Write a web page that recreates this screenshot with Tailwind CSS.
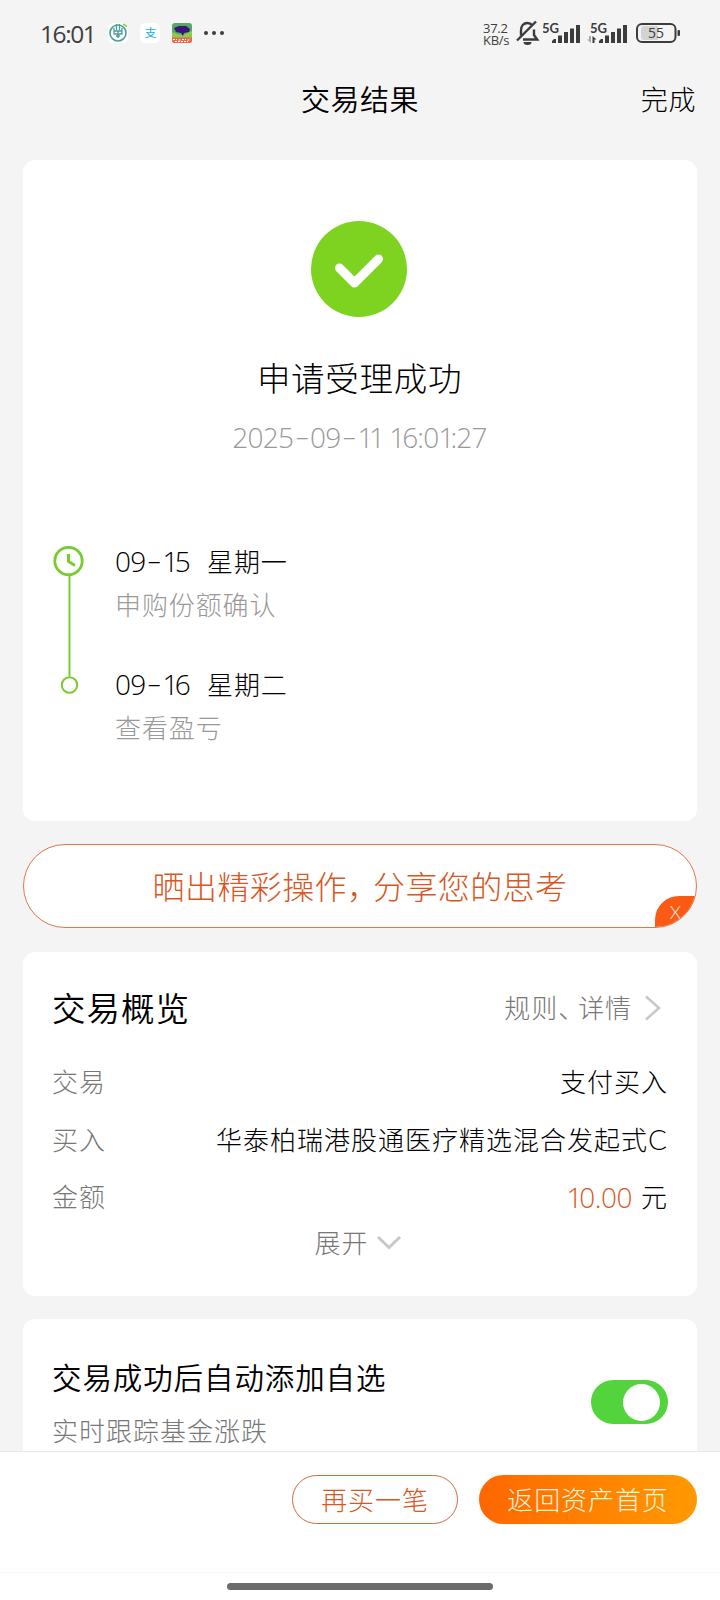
<!DOCTYPE html>
<html lang="zh-CN">
<head>
  <meta charset="UTF-8">
  <meta name="viewport" content="width=device-width, initial-scale=1.0">
  <title>交易结果</title>
  <script src="https://cdn.jsdelivr.net/npm/@tailwindcss/browser@4"></script>
</head>
<body class="bg-[#f4f4f4] text-black font-light font-['Lato','Noto_Sans_CJK_SC',sans-serif]">
  <div class="w-[720px] h-[1600px] flex flex-col overflow-hidden">

    <!-- Status bar -->
    <div class="h-[66px] shrink-0 flex items-center pl-[40px] pr-[40px] text-[#404040]">
      <span class="w-[68px] pt-px text-[24.500px] leading-[30px] font-normal font-['Open_Sans',sans-serif] tracking-[-1.400px]">16:01</span>
      <svg class="w-5 h-5 shrink-0" viewBox="0 0 20 20" fill="none">
        <rect width="20" height="20" rx="5" fill="#fff"/>
        <circle cx="10" cy="10" r="8" stroke="#4a9f98" stroke-width="1.6"/>
        <path d="M8.500 1v6M11.500 1v6M6 5v6h8V5M6 8h8M10 8v7M8 13h4" stroke="#4a9f98" stroke-width="1.300"/>
        <path d="M15 1l4 2.500" stroke="#8bd14f" stroke-width="1.6"/>
      </svg>
      <span class="ml-3 w-5 h-5 shrink-0 rounded-[5px] bg-white text-[#19aee4] font-normal text-[11px] leading-[20px] text-center"><span class="inline-block scale-x-110">支</span></span>
      <svg class="ml-3 w-5 h-5 shrink-0" viewBox="0 0 20 20">
        <rect width="20" height="20" rx="3" fill="#55a866"/>
        <path d="M0 9l5 2 6 1 9-4v7H0z" fill="#8fc94d"/>
        <path d="M2 5l5-2h7l4 3-1 3-5 1-1 3-2-3-5-1z" fill="#3b1479"/>
        <path d="M0 14.500h20v2.500a3 3 0 0 1-3 3H3a3 3 0 0 1-3-3z" fill="#e9694a"/>
        <path d="M1 16.500h4M6.500 17h2M10 16.500h4M15.500 17h3M3 18.500h13" stroke="#fff" stroke-width="1" stroke-dasharray="2 1"/>
      </svg>
      <svg class="ml-3 w-5 h-5 shrink-0" viewBox="0 0 20 20" fill="#3c3c3c">
        <circle cx="2" cy="10" r="2"/><circle cx="10" cy="10" r="2"/><circle cx="18" cy="10" r="2"/>
      </svg>

      <div class="ml-auto flex items-center">
        <div class="w-[34px] pt-px font-['Open_Sans',sans-serif] text-[13px] tracking-[-0.300px] font-normal whitespace-nowrap flex flex-col">
          <span class="h-[12px] leading-[12px]">37.2</span>
          <span class="h-[12px] leading-[12px]">KB/s</span>
        </div>
        <svg class="-ml-px w-6 h-[26px]" viewBox="0 0 24 26" fill="none" stroke="#3c3c3c" stroke-width="2.400">
          <path d="M5 15.500V10.500C5 6 7.500 3 11.500 3c2 0 3.600.8 4.800 2.200M18 9.500V15l3.200 4.500H7"/>
          <path d="M1 20.500L20 1.500"/>
          <path d="M7.500 22h8a4 3 0 0 1-8 0z" fill="#3c3c3c" stroke="none"/>
        </svg>
        <svg class="ml-[3px] w-[38px] h-[26px]" viewBox="0 0 38 26" fill="#3c3c3c">
          <text x="-1" y="12.500" font-family="Lato" font-weight="700" font-size="13">5G</text>
          <path d="M9 23v-2l2-2h2v4zM15 15.500h4v7.500H15zM21 12h4v11H21zM27 8.500h4V23H27zM33 5h4v18H33z"/>
        </svg>
        <svg class="ml-[6px] w-[42px] h-[26px]" viewBox="0 0 42 26" fill="#3c3c3c">
          <text x="3" y="12.500" font-family="Lato" font-weight="700" font-size="13">5G</text>
          <path d="M4 16v7l-4-3.500h2V16z" fill="#aaa"/>
          <path d="M5.500 23v-7l4 3.500h-2V23z"/>
          <path d="M12 23v-2l2-2h2v4zM18 15.500h4v7.500H18zM24 12h4v11H24zM30 8.500h4V23H30zM36 5h4v18H36z"/>
        </svg>
        <svg class="ml-[7px] w-[44px] h-[20px]" viewBox="0 0 44 20">
          <path d="M8 3h14v14H8a3 3 0 0 1-3-3V6a3 3 0 0 1 3-3z" fill="#d3d3d3"/>
          <rect x="1" y="1" width="38.500" height="18" rx="5" fill="none" stroke="#3c3c3c" stroke-width="2"/>
          <rect x="41.500" y="7" width="2.500" height="6" rx="1" fill="#3c3c3c"/>
          <text x="20" y="15" text-anchor="middle" font-family="Open Sans" font-size="14" font-weight="400" fill="#3c3c3c">55</text>
        </svg>
      </div>
    </div>

    <!-- Title bar -->
    <header class="h-[94px] shrink-0 grid grid-cols-3 items-start pt-[14px] px-[24px] leading-[40px]">
      <h1 class="col-start-2 text-center text-[29px] font-[350] tracking-[0.500px]">交易结果</h1>
      <a class="text-right text-[27px] tracking-[0.600px]">完成</a>
    </header>

    <main class="flex-1 min-h-0 overflow-hidden pl-[23px] pr-[23px] flex flex-col gap-[23px]">
      <!-- Result -->
      <section class="h-[661px] shrink-0 rounded-xl bg-white flex flex-col items-center pt-[61px] pr-px">
        <svg class="w-24 h-24 -ml-px" viewBox="0 0 96 96" fill="none">
          <circle cx="48" cy="48" r="48" fill="#7ed321"/>
          <path d="M28.500 47L43.500 62L67.500 38" stroke="#fff" stroke-width="9" stroke-linecap="round" stroke-linejoin="round"/>
        </svg>
        <h2 class="mt-[37px] text-[33.500px] leading-[48px] tracking-[0.700px]">申请受理成功</h2>
        <p class="mt-[15px] font-['Open_Sans',sans-serif] text-[28px] leading-[40px] tracking-[-0.800px] text-[#999]">2025<span class="inline-block w-[17px] text-center scale-x-160 -translate-y-[2px]">-</span>09<span class="inline-block w-[17px] text-center scale-x-160 -translate-y-[2px]">-</span><span class="tracking-[-4.500px]">11</span><span class="tracking-[1.500px]"> </span><span class="tracking-[-3px]">1</span>6:0<span class="tracking-[-4px]">1</span>:27</p>

        <div class="self-stretch mt-[88px] pl-[30px] flex">
          <svg class="w-[32px] h-[150px] shrink-0" viewBox="0 0 32 150" fill="none" stroke="#79cb30">
            <circle cx="15.500" cy="16" r="13.700" stroke-width="2.800"/>
            <path d="M15.500 9v7.500l6.500 4" stroke-width="3"/>
            <path d="M16.500 30v101.500" stroke-width="2"/>
            <circle cx="16.500" cy="140" r="7.700" stroke-width="2"/>
          </svg>
          <ul class="pl-[30px] text-[26px] tracking-[0.900px]">
            <li class="h-[123px]">
              <div class="flex leading-[34px]"><span class="w-[92px] font-['Open_Sans',sans-serif] text-[28px] leading-[32px] tracking-[-0.800px]">09<span class="inline-block w-[17px] text-center scale-x-160 -translate-y-[2px]">-</span><span class="tracking-[-3.500px]">1</span>5</span><span>星期一</span></div>
              <div class="mt-[9px] leading-[34px] text-[#999]">申购份额确认</div>
            </li>
            <li>
              <div class="flex leading-[34px]"><span class="w-[92px] font-['Open_Sans',sans-serif] text-[28px] leading-[32px] tracking-[-0.800px]">09<span class="inline-block w-[17px] text-center scale-x-160 -translate-y-[2px]">-</span><span class="tracking-[-3.500px]">1</span>6</span><span>星期二</span></div>
              <div class="mt-[9px] leading-[34px] text-[#999]">查看盈亏</div>
            </li>
          </ul>
        </div>
      </section>

      <!-- Share banner -->
      <section class="relative h-[84px] shrink-0 rounded-full overflow-hidden border border-[#e0764a] bg-white flex items-center justify-center pt-[2px] text-[32px] text-[#d9571f] tracking-[0.400px]">
        <span>晒出精彩操作<span class="tracking-[-6px]">，</span>分享您的思考</span>
        <span class="absolute right-0 bottom-0 w-[41px] h-[31px] rounded-tl-[24px] bg-[#fa5a14] text-white/90 text-[18px] leading-[32px] text-center">X</span>
      </section>

      <!-- Overview -->
      <section class="h-[344px] mt-px shrink-0 rounded-xl bg-white px-[29px] pt-[34px] text-[26px] tracking-[1px]">
        <div class="flex items-center justify-between leading-[44px]">
          <h3 class="text-[33.500px] font-[350]">交易概览</h3>
          <a class="flex items-center text-[#777] pr-[7px] tracking-[0.900px]">
            <span>规则<span class="tracking-[-6px]">、</span>详情</span>
            <svg class="ml-[12px] w-[17px] h-[26px]" viewBox="0 0 17 26" fill="none" stroke="#c8c8c8" stroke-width="2.500"><path d="M2 1.500L15 13L2 24.500"/></svg>
          </a>
        </div>
        <dl class="mt-[24px] leading-[57.500px]">
          <div class="flex justify-between"><dt class="text-[#777]">交易</dt><dd>支付买入</dd></div>
          <div class="flex justify-between"><dt class="text-[#777]">买入</dt><dd>华泰柏瑞港股通医疗精选混合发起式<span class="text-[28px] leading-none">C</span></dd></div>
          <div class="flex justify-between"><dt class="text-[#777]">金额</dt><dd class="flex gap-[9px]"><span class="font-['Open_Sans',sans-serif] text-[28px] leading-[56px] text-[#d9571f] tracking-[-0.500px]"><span class="tracking-[-3px]">1</span>0.00</span>元</dd></div>
        </dl>
        <div class="-mt-[4px] pr-[4px] flex items-center justify-center leading-[40px] text-[#777]">
          <span>展开</span>
          <svg class="ml-[7px] w-[26px] h-[15px]" viewBox="0 0 26 15" fill="none" stroke="#c8c8c8" stroke-width="3"><path d="M2 2L13 12.500L24 2"/></svg>
        </div>
      </section>

      <!-- Watchlist switch -->
      <section class="h-[200px] shrink-0 rounded-t-xl bg-white px-[29px] pt-[37px] flex justify-between">
        <div>
          <h3 class="text-[29.500px] leading-[44px] tracking-[0.900px] font-[350]">交易成功后自动添加自选</h3>
          <p class="mt-[11px] text-[26px] leading-[40px] tracking-[1px] text-[#777]">实时跟踪基金涨跌</p>
        </div>
        <div class="mt-[24px] w-[77px] h-[44px] rounded-full bg-[#53d43d] flex items-center justify-end pr-[8px]">
          <span class="w-[37px] h-[37px] rounded-full bg-white"></span>
        </div>
      </section>
    </main>

    <!-- Actions -->
    <footer class="h-[149px] shrink-0 bg-white border-t border-[#e6e6e6] flex flex-col">
      <div class="h-[121px] border-b border-[#f8f8f8] flex justify-end gap-[21px] pt-[23px] pr-[23px] text-[26px] tracking-[0.900px] leading-[48px] text-center">
        <button class="w-[166px] h-[49px] rounded-full border border-[#d2683c] text-[#d9571f]">再买一笔</button>
        <button class="w-[218px] h-[49px] rounded-full bg-linear-to-r from-[#ff6600] to-[#ff9900] text-[#fff3dc]">返回资产首页</button>
      </div>
      <div class="mt-[10px] mx-auto w-[266px] h-[7px] rounded-full bg-[#6b6b6b]"></div>
    </footer>
  </div>
</body>
</html>
